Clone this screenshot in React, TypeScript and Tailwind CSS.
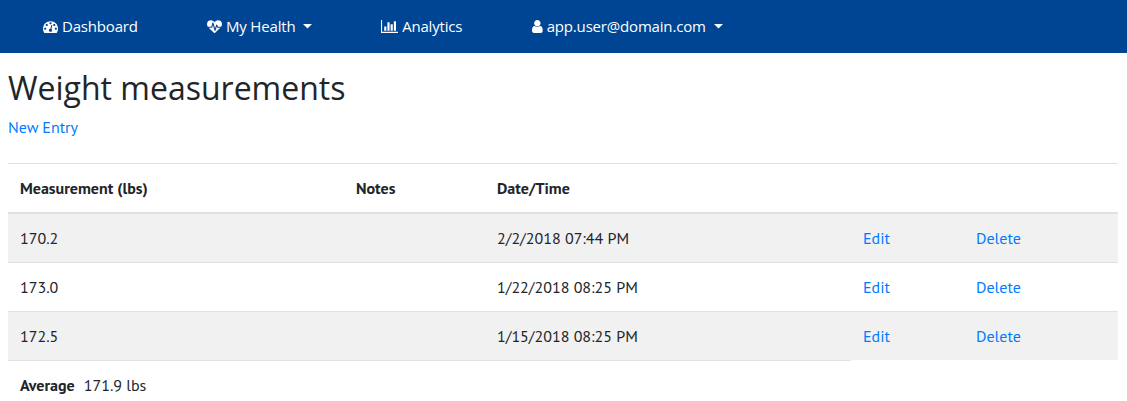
import React from "react";

const icons = {
  tachometer: {
    viewBox: "0 0 1792 1792",
    d: "M384 1152q0-53-37.5-90.5t-90.5-37.5-90.5 37.5-37.5 90.5 37.5 90.5 90.5 37.5 90.5-37.5 37.5-90.5zm192-448q0-53-37.5-90.5t-90.5-37.5-90.5 37.5-37.5 90.5 37.5 90.5 90.5 37.5 90.5-37.5 37.5-90.5zm428 481l101-382q6-26-7.5-48.5t-38.5-29.5-48 6.5-30 39.5l-101 382q-60 5-107 43.5t-63 98.5q-20 77 20 146t117 89 146-20 89-117q16-60-6-117t-72-91zm660-33q0-53-37.5-90.5t-90.5-37.5-90.5 37.5-37.5 90.5 37.5 90.5 90.5 37.5 90.5-37.5 37.5-90.5zm-640-640q0-53-37.5-90.5t-90.5-37.5-90.5 37.5-37.5 90.5 37.5 90.5 90.5 37.5 90.5-37.5 37.5-90.5zm448 192q0-53-37.5-90.5t-90.5-37.5-90.5 37.5-37.5 90.5 37.5 90.5 90.5 37.5 90.5-37.5 37.5-90.5zm320 448q0 261-141 483-19 29-54 29h-1402q-35 0-54-29-141-221-141-483 0-182 71-348t191-286 286-191 348-71 348 71 286 191 191 286 71 348z",
  },
  heartbeat: {
    viewBox: "0 -150 1792 1792",
    d: "M1280 896h305q-5 6-10 10.5t-9 7.5l-3 4-623 600q-18 18-44 18t-44-18l-624-602q-5-2-21-20h369q22 0 39.5-13.5t22.5-34.5l70-281 190 667q6 20 23 33t39 13q21 0 38-13t23-33l146-485 56 112q18 35 57 35zm512-428q0 145-103 300h-369l-111-221q-8-17-25.5-27t-36.5-8q-45 5-56 46l-129 430-196-686q-6-20-23.5-33t-39.5-13-39 13.5-22 34.5l-116 464h-423q-103-155-103-300 0-220 127-344t351-124q62 0 126.5 21.5t120 58 95.5 68.5 76 68q36-36 76-68t95.5-68.5 120-58 126.5-21.5q224 0 351 124t127 344z",
  },
  chart: {
    viewBox: "0 0 2048 1792",
    d: "M640 896v512h-256v-512h256zm384-512v1024h-256v-1024h256zm1024 1152v128h-2048v-1536h128v1408h1920zm-640-896v768h-256v-768h256zm384-384v1152h-256v-1152h256z",
  },
  user: {
    viewBox: "256 0 1280 1792",
    d: "M1536 1399q0 109-62.5 187t-150.5 78h-854q-88 0-150.5-78t-62.5-187q0-85 8.5-160.5t31.5-152 58.5-131 94-89 134.5-34.5q131 128 313 128t313-128q76 0 134.5 34.5t94 89 58.5 131 31.5 152 8.5 160.5zm-256-887q0 159-112.5 271.5t-271.5 112.5-271.5-112.5-112.5-271.5 112.5-271.5 271.5-112.5 271.5 112.5 112.5 271.5z",
  },
};

function NavItem({ icon, label, className, menu = false }: {
  icon: keyof typeof icons;
  label: string;
  className: string;
  menu?: boolean;
}) {
  return (
    <a href="#" className={`flex shrink-0 items-center ${className}`}>
      <svg viewBox={icons[icon].viewBox} className="mr-1 h-[15px] w-auto shrink-0" fill="currentColor">
        <path d={icons[icon].d} />
      </svg>
      <span>{label}</span>
      {menu && (
        <svg viewBox="0 0 10 5" className="ml-2 h-[4.5px] w-[9px]" fill="currentColor">
          <path d="M0 0h10L5 5z" />
        </svg>
      )}
    </a>
  );
}

const measurements = [
  { value: "170.2", date: "2/2/2018 07:44 PM" },
  { value: "173.0", date: "1/22/2018 08:25 PM" },
  { value: "172.5", date: "1/15/2018 08:25 PM" },
];

export default function App() {
  return (
    <div className="h-[401px] overflow-hidden bg-white font-['PT_Sans','Noto_Sans',sans-serif] text-base text-[#212529]">
      <nav className="flex h-[53px] items-center bg-[#004494] pl-[43px] font-['Open_Sans',sans-serif] text-[15px] tracking-[-0.18px] text-white">
        <NavItem icon="tachometer" label="Dashboard" className="w-[164px]" />
        <NavItem icon="heartbeat" label="My Health" className="w-[174px]" menu />
        <NavItem icon="chart" label="Analytics" className="w-[151px]" />
        <NavItem icon="user" label="app.user@domain.com" className="" menu />
      </nav>
      <main className="px-2 pt-4">
        <h1 className="mb-2 font-['Open_Sans',sans-serif] text-[32px] leading-[38px]">Weight measurements</h1>
        <a href="#" className="block w-fit text-[#007bff]">New Entry</a>
        <table className="mt-6 w-[1110px] table-fixed border-separate border-spacing-0 text-left">
          <colgroup>
            <col className="w-[336px]" />
            <col className="w-[141px]" />
            <col className="w-[366px]" />
            <col className="w-[113px]" />
            <col className="w-[154px]" />
          </colgroup>
          <thead>
            <tr className="[&>th]:border-t [&>th]:border-b-2 [&>th]:border-[#dee2e6] [&>th]:p-3">
              <th>Measurement (lbs)</th>
              <th>Notes</th>
              <th>Date/Time</th>
              <th />
              <th />
            </tr>
          </thead>
          <tbody>
            {measurements.map((m) => (
              <tr
                key={m.value}
                className="odd:bg-[#f1f1f1] [&>td]:border-t [&>td]:border-[#dee2e6] [&>td]:p-3 first:[&>td]:border-t-0"
              >
                <td>{m.value}</td>
                <td />
                <td>{m.date}</td>
                <td><a href="#" className="text-[#007bff]">Edit</a></td>
                <td><a href="#" className="text-[#007bff]">Delete</a></td>
              </tr>
            ))}
          </tbody>
          <tfoot>
            <tr>
              <td colSpan={3} className="border-t border-[#dee2e6] p-3">
                <b className="mr-[9px]">Average</b>
                <span>171.9 lbs</span>
              </td>
            </tr>
          </tfoot>
        </table>
      </main>
    </div>
  );
}
